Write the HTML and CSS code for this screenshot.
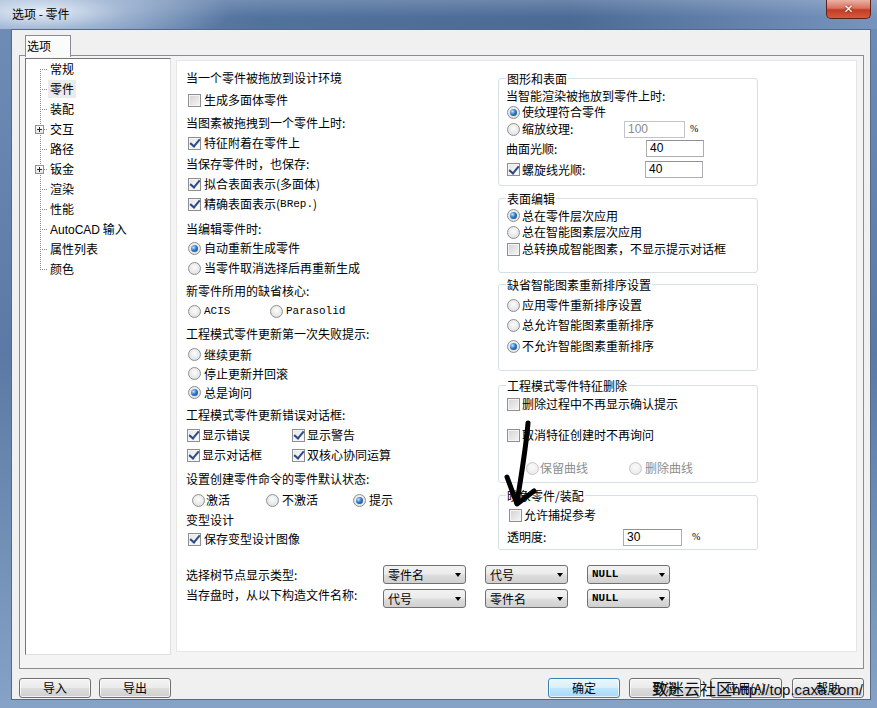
FILE: index.html
```html
<!DOCTYPE html>
<html lang="zh-CN">
<head>
<meta charset="utf-8">
<title>选项 - 零件</title>
<link rel="stylesheet" href="styles.css">
</head>
<body>
<div class="window">
  <div class="titlebar">
    <span class="title">选项 - 零件</span>
    <div class="close">✕</div>
  </div>
  <div class="client">
    <div class="tabs"><div class="tab">选项</div></div>
    <div class="pane">
      <div class="tree">
        <ul class="tree-list">
          <li class="ti"><span class="lbl">常规</span></li>
          <li class="ti sel"><span class="lbl">零件</span></li>
          <li class="ti"><span class="lbl">装配</span></li>
          <li class="ti exp"><span class="plus"></span><span class="lbl">交互</span></li>
          <li class="ti"><span class="lbl">路径</span></li>
          <li class="ti exp"><span class="plus"></span><span class="lbl">钣金</span></li>
          <li class="ti"><span class="lbl">渲染</span></li>
          <li class="ti"><span class="lbl">性能</span></li>
          <li class="ti"><span class="lbl"><span class="latin">AutoCAD</span> 输入</span></li>
          <li class="ti"><span class="lbl">属性列表</span></li>
          <li class="ti"><span class="lbl">颜色</span></li>
        </ul>
      </div>
      <div class="content">
        <div class="cols">
          <div class="lcol">
            <div class="row">当一个零件被拖放到设计环境</div>
            <div class="row m2"><span class="cb"></span>生成多面体零件</div>
            <div class="row m3">当图素被拖拽到一个零件上时:</div>
            <div class="row"><span class="cb on"></span>特征附着在零件上</div>
            <div class="row m1">当保存零件时，也保存:</div>
            <div class="row"><span class="cb on"></span>拟合表面表示(多面体)</div>
            <div class="row"><span class="cb on"></span>精确表面表示(<span class="mono">BRep.</span>)</div>
            <div class="row m5 h19">当编辑零件时:</div>
            <div class="row"><span class="rb on"></span>自动重新生成零件</div>
            <div class="row"><span class="rb"></span>当零件取消选择后再重新生成</div>
            <div class="row m3">新零件所用的缺省核心:</div>
            <div class="row"><span class="rb"></span><span class="mono w-acis">ACIS</span><span class="rb"></span><span class="mono">Parasolid</span></div>
            <div class="row m3">工程模式零件更新第一次失败提示:</div>
            <div class="row m1 h19"><span class="rb"></span>继续更新</div>
            <div class="row h19"><span class="rb"></span>停止更新并回滚</div>
            <div class="row h19"><span class="rb on"></span>总是询问</div>
            <div class="row m3">工程模式零件更新错误对话框:</div>
            <div class="row"><span class="cb cb-tight on"></span><span class="w-col">显示错误</span><span class="cb cb-tight on"></span>显示警告</div>
            <div class="row"><span class="cb cb-tight on"></span><span class="w-col">显示对话框</span><span class="cb cb-tight on"></span>双核心协同运算</div>
            <div class="row m4">设置创建零件命令的零件默认状态:</div>
            <div class="row m1"><span class="rb rb-in"></span><span class="w-s1">激活</span><span class="rb"></span><span class="w-s2">不激活</span><span class="rb on"></span>提示</div>
            <div class="row h19">变型设计</div>
            <div class="row"><span class="cb on"></span>保存变型设计图像</div>
          </div>
          <div class="rcol">
            <fieldset class="grp">
              <legend>图形和表面</legend>
              <div class="row h17">当智能渲染被拖放到零件上时:</div>
              <div class="row h16"><span class="rb r-in on"></span>使纹理符合零件</div>
              <div class="row h18"><span class="rb r-in"></span><span class="w-zoom">缩放纹理:</span><span class="tb dis w61">100</span><span class="pct">%</span></div>
              <div class="row h21"><span class="w-smooth">曲面光顺:</span><span class="tb">40</span></div>
              <div class="row h21"><span class="cb c-in on"></span><span class="w-helix">螺旋线光顺:</span><span class="tb">40</span></div>
            </fieldset>
            <fieldset class="grp g2">
              <legend>表面编辑</legend>
              <div class="row h17"><span class="rb r-in on"></span>总在零件层次应用</div>
              <div class="row h16"><span class="rb r-in"></span>总在智能图素层次应用</div>
              <div class="row h18"><span class="cb c-in"></span>总转换成智能图素，不显示提示对话框</div>
            </fieldset>
            <fieldset class="grp g3">
              <legend>缺省智能图素重新排序设置</legend>
              <div class="row m2"><span class="rb r-in"></span>应用零件重新排序设置</div>
              <div class="row"><span class="rb r-in"></span>总允许智能图素重新排序</div>
              <div class="row m1"><span class="rb r-in on"></span>不允许智能图素重新排序</div>
            </fieldset>
            <fieldset class="grp g4">
              <legend>工程模式零件特征删除</legend>
              <div class="row"><span class="cb c-in"></span>删除过程中不再显示确认提示</div>
              <div class="row m11"><span class="cb c-in"></span>取消特征创建时不再询问</div>
              <div class="row m13 dis-text"><span class="rb dis r-deep"></span><span class="w-keep">保留曲线</span><span class="rb dis"></span>删除曲线</div>
            </fieldset>
            <fieldset class="grp g5">
              <legend>映象零件/装配</legend>
              <div class="row m1"><span class="cb c-in3"></span>允许捕捉参考</div>
              <div class="row m2"><span class="w-trans">透明度:</span><span class="tb w59">30</span><span class="pct pct-wide">%</span></div>
            </fieldset>
          </div>
        </div>
        <div class="selrows">
          <div class="srow srow1">
            <span class="lab">选择树节点显示类型:</span>
            <span class="dd">零件名</span>
            <span class="dd">代号</span>
            <span class="dd"><span class="nul">NULL</span></span>
          </div>
          <div class="srow srow2">
            <span class="lab">当存盘时，从以下构造文件名称:</span>
            <span class="dd">代号</span>
            <span class="dd">零件名</span>
            <span class="dd"><span class="nul">NULL</span></span>
          </div>
        </div>
      </div>
    </div>
    <div class="buttons">
      <div class="btn">导入</div>
      <div class="btn">导出</div>
      <div class="btn def push">确定</div>
      <div class="btn">取消</div>
      <div class="btn">应用(A)</div>
      <div class="btn last">帮助</div>
    </div>
  </div>
  <div class="watermark"><span class="wm-cjk">致迷云社区</span><span class="wm-url">http://top.caxa.com/</span></div>
  <svg class="arrow" width="877" height="708" viewBox="0 0 877 708">
    <path d="M528 423 C526 448 521 476 517 503" fill="none" stroke="#000" stroke-width="5" stroke-linecap="round"/>
    <path d="M507 477 L517 504 L534 491" fill="none" stroke="#000" stroke-width="5" stroke-linecap="round" stroke-linejoin="round"/>
  </svg>
</div>
</body>
</html>
```

FILE: styles.css
```css
* { box-sizing: border-box; }
html, body { margin: 0; padding: 0; }
body {
  width: 877px;
  height: 708px;
  overflow: hidden;
  font-family: "Noto Sans CJK SC", "Liberation Sans", sans-serif;
  font-size: 12px;
  line-height: 20px;
  color: #000;
}

.window {
  position: relative;
  width: 877px;
  height: 708px;
  overflow: hidden;
  background: linear-gradient(to bottom, #6f8db7 0, #5b79a4 50%, #86a2c6 100%);
}

/* title bar */
.titlebar {
  height: 29px;
  display: flex;
  align-items: flex-start;
  background:
    radial-gradient(ellipse 190px 40px at 40px 12px, rgba(236,243,251,0.95) 0, rgba(200,216,236,0.55) 45%, rgba(255,255,255,0) 100%),
    linear-gradient(to bottom, rgba(255,255,255,0.18) 0, rgba(255,255,255,0) 60%),
    linear-gradient(to right, #7491bb 0, #52729e 30%, #4b6a96 65%, #7694be 100%);
}
.title {
  margin: 5px 0 0 12px;
  line-height: 18px;
}
.close {
  margin-left: auto;
  margin-right: 6px;
  width: 45px;
  height: 19px;
  border: 1px solid #5b231a;
  border-top: 0;
  border-radius: 0 0 5px 5px;
  background: linear-gradient(#eab2a5 0, #d8735e 45%, #c23c22 55%, #d65a3f 100%);
  display: flex;
  align-items: center;
  justify-content: center;
  color: #fff;
  font: bold 12px/1 "DejaVu Sans", sans-serif;
  text-shadow: 0 0 2px #4a0c00;
}

/* client */
.client {
  margin: 0 6px 0 11px;
  height: 671px;
  border: 1px solid #566a85;
  background: #f0f0f0;
  padding: 5px 6px 0 7px;
}
.tabs {
  height: 21px;
  padding-left: 6px;
  display: flex;
}
.tab {
  position: relative;
  z-index: 1;
  width: 46px;
  height: 22px;
  border: 1px solid #898c95;
  border-bottom: 0;
  background: #fbfbfb;
  padding-left: 1px;
  line-height: 20px;
}
.pane {
  width: 845px;
  height: 614px;
  margin-top: -1px;
  border: 1px solid #898c95;
  background: #f4f4f4;
  display: flex;
  align-items: flex-start;
  padding: 2px 0 0 5px;
}

/* tree */
.tree {
  width: 146px;
  height: 597px;
  border: 1px solid;
  border-color: #767676 #dedede #dedede #767676;
  background: #fff;
}
.tree-list {
  list-style: none;
  margin: 0;
  padding: 0;
  background: repeating-linear-gradient(to bottom, #8a8a8a 0 1px, transparent 1px 2px) 14px 10px / 1px 201px no-repeat;
}
.ti {
  height: 20px;
  line-height: 20px;
  display: flex;
  align-items: center;
  padding-left: 24px;
  background: repeating-linear-gradient(to right, #8a8a8a 0 1px, transparent 1px 2px) 14px 10px / 8px 1px no-repeat;
}
.ti.exp { padding-left: 9px; }
.plus {
  flex: none;
  width: 9px;
  height: 9px;
  margin-right: 6px;
  border: 1px solid #919191;
  background:
    linear-gradient(#2a2a2a, #2a2a2a) center / 5px 1px no-repeat,
    linear-gradient(#2a2a2a, #2a2a2a) center / 1px 5px no-repeat,
    linear-gradient(#ffffff, #e4e4e4);
}
.sel .lbl {
  background: #ebebeb;
  margin-left: -2px;
  padding: 0 2px;
  line-height: 18px;
}
.latin { font-family: "Liberation Sans", sans-serif; font-size: 12px; }

/* content */
.content {
  width: 681px;
  height: 592px;
  margin: 2px 0 0 5px;
  background: #fff;
  border: 1px solid #e6e6e6;
  padding: 7px 0 0 9px;
}
.cols {
  display: flex;
  align-items: flex-start;
}
.lcol { width: 312px; }
.rcol { width: 260px; margin-top: 2px; }

.row {
  display: flex;
  align-items: center;
  height: 20px;
  white-space: nowrap;
}
.h16 { height: 16px; }
.h17 { height: 17px; }
.h18 { height: 18px; }
.h19 { height: 19px; }
.h21 { height: 21px; }
.m1 { margin-top: 1px; }
.m2 { margin-top: 2px; }
.m3 { margin-top: 3px; }
.m4 { margin-top: 4px; }
.m5 { margin-top: 5px; }
.m11 { margin-top: 11px; }
.m13 { margin-top: 13px; }

.mono {
  font-family: "Liberation Mono", monospace;
  font-size: 11px;
}
.w-acis { width: 64px; }
.w-col { width: 89px; }
.w-s1 { width: 58px; }
.w-s2 { width: 69px; }

/* checkbox & radio */
.cb {
  flex: none;
  width: 13px;
  height: 13px;
  margin: 0 3px 0 2px;
  border: 1px solid #8e8f8f;
  background: linear-gradient(135deg, #d2d2d2 0, #f6f6f6 100%);
  box-shadow: inset 0 0 0 1px #f4f4f4;
  display: flex;
  align-items: center;
  justify-content: center;
}
.cb.on { background: linear-gradient(135deg, #e6e6e6 0, #fdfdfd 100%); }
.cb.on::after {
  content: "";
  width: 4px;
  height: 8px;
  border: solid #2c4a86;
  border-width: 0 2px 2px 0;
  transform: translateY(-1px) rotate(40deg);
}
.cb-tight { margin: 0 2px 0 1px; }
.c-in { margin-left: 1px; margin-right: 2px; }
.c-in3 { margin-left: 3px; margin-right: 2px; }

.rb {
  flex: none;
  width: 13px;
  height: 13px;
  margin: 0 3px 0 2px;
  border-radius: 50%;
  border: 1px solid #8e8f8f;
  background: radial-gradient(circle at 50% 40%, #fdfdfd 0, #d8d8d8 100%);
  display: flex;
  align-items: center;
  justify-content: center;
}
.rb.on::after {
  content: "";
  width: 7px;
  height: 7px;
  border-radius: 50%;
  background: radial-gradient(circle at 35% 35%, #c4e6ff 0, #2f79c6 45%, #0c3d7c 100%);
}
.rb-in { margin-left: 6px; margin-right: 1px; }
.r-in { margin-left: 1px; margin-right: 2px; }
.rb.dis {
  border-color: #c6c6c6;
  background: radial-gradient(circle at 50% 40%, #fafafa 0, #e6e6e6 100%);
}
.r-deep { margin-left: 20px; margin-right: 1px; }
.dis-text { color: #8d8d8d; }

/* group boxes */
.grp {
  margin: 0;
  padding: 0 0 5px 7px;
  border: 1px solid #d5dfe5;
  border-radius: 3px;
  min-width: 0;
}
.grp legend {
  padding: 0 1px;
  height: 17px;
  line-height: 17px;
}
.g2 { margin-top: 4px; padding-bottom: 14px; }
.g3 { margin-top: 3px; padding-bottom: 14px; }
.g4 { margin-top: 6px; padding-bottom: 4px; }
.g5 { margin-top: 4px; padding-bottom: 2px; }

.w-zoom { width: 102px; }
.w-smooth { width: 140px; }
.w-helix { width: 123px; }
.w-keep { width: 87px; }
.w-trans { width: 116px; margin-left: 1px; }

.tb {
  flex: none;
  width: 58px;
  height: 17px;
  border: 1px solid #abadb3;
  border-top-color: #8e9196;
  background: #fff;
  padding-left: 3px;
  line-height: 15px;
  font-family: "Liberation Sans", sans-serif;
  font-size: 12px;
}
.tb.dis { color: #8a8a8a; border-color: #c2c4c8; }
.w61 { width: 61px; }
.w59 { width: 59px; }
.pct {
  margin-left: 5px;
  font-family: "Liberation Serif", serif;
  font-size: 10px;
}
.pct-wide { margin-left: 10px; }

/* drop-downs */
.selrows { margin-top: 14px; }
.srow {
  display: flex;
  align-items: flex-start;
  white-space: nowrap;
}
.srow1 { height: 21px; }
.srow1 .lab { line-height: 21px; }
.srow1 .dd { margin-top: 1px; }
.srow2 { height: 24px; }
.srow2 .dd { margin-top: 4px; }
.lab { width: 197px; }
.dd {
  width: 83px;
  height: 19px;
  margin-right: 19px;
  border: 1px solid #707070;
  border-radius: 3px;
  background: linear-gradient(#f3f3f3 0, #ebebeb 45%, #dddddd 55%, #d0d0d0 100%);
  display: flex;
  align-items: center;
  padding-left: 4px;
  line-height: 17px;
}
.dd::after {
  content: "";
  margin-left: auto;
  margin-right: 4px;
  border-style: solid;
  border-color: #000 transparent transparent;
  border-width: 4px 3.5px 0;
}
.nul {
  font-family: "Liberation Mono", monospace;
  font-weight: bold;
  font-size: 11px;
}

/* buttons */
.buttons {
  display: flex;
  margin-top: 9px;
}
.btn {
  width: 72px;
  height: 20px;
  border: 1px solid #707070;
  border-radius: 3px;
  background: linear-gradient(#f3f3f3 0, #ebebeb 48%, #dddddd 52%, #cfcfcf 100%);
  box-shadow: inset 0 0 0 1px rgba(255,255,255,0.7);
  text-align: center;
  line-height: 18px;
  margin-left: 9px;
}
.btn:first-child { margin-left: 0; }
.btn:nth-child(2) { margin-left: 8px; }
.btn.push { margin-left: auto; }
.btn.last { margin-left: 10px; }
.btn.def {
  border-color: #3c7fb1;
  background: linear-gradient(#eaf6fd 0, #d9f0fc 48%, #bee6fd 52%, #a7d9f5 100%);
}

/* overlays */
.watermark {
  position: absolute;
  left: 652px;
  top: 678px;
  line-height: 20px;
  white-space: nowrap;
  color: #111;
}
.wm-cjk { font-size: 16px; }
.wm-url { font-family: "Liberation Sans", sans-serif; font-size: 15px; }
.arrow {
  position: absolute;
  left: 0;
  top: 0;
  pointer-events: none;
}
```
